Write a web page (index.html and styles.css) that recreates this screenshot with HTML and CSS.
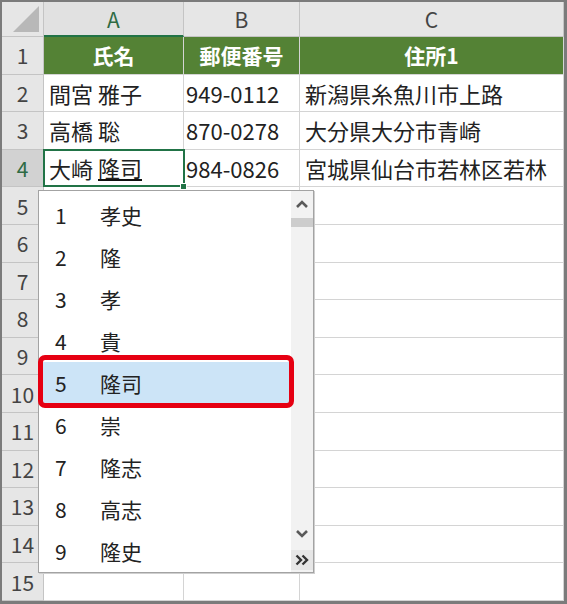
FILE: index.html
```html
<!DOCTYPE html>
<html>
<head>
    <title>氏名の入力候補</title>
    <link rel="stylesheet" href="styles.css">
</head>
<body>
    <div class="sheet">
        <div class="grid">
            <div class="cell head corner"><span class="tri"></span></div>
            <div class="cell head col-sel">A</div>
            <div class="cell head">B</div>
            <div class="cell head">C</div>

            <div class="cell head">1</div>
            <div class="cell title">氏名</div>
            <div class="cell title">郵便番号</div>
            <div class="cell title">住所1</div>

            <div class="cell head">2</div>
            <div class="cell">間宮 雅子</div>
            <div class="cell num">949-0112</div>
            <div class="cell">新潟県糸魚川市上路</div>

            <div class="cell head">3</div>
            <div class="cell">高橋 聡</div>
            <div class="cell num">870-0278</div>
            <div class="cell">大分県大分市青崎</div>

            <div class="cell head row-sel">4</div>
            <div class="cell active">大崎&nbsp;<span class="ime">隆司</span><span class="handle"></span></div>
            <div class="cell num">984-0826</div>
            <div class="cell">宮城県仙台市若林区若林</div>

            <div class="cell head">5</div><div class="cell"></div><div class="cell"></div><div class="cell"></div>
            <div class="cell head">6</div><div class="cell"></div><div class="cell"></div><div class="cell"></div>
            <div class="cell head">7</div><div class="cell"></div><div class="cell"></div><div class="cell"></div>
            <div class="cell head">8</div><div class="cell"></div><div class="cell"></div><div class="cell"></div>
            <div class="cell head">9</div><div class="cell"></div><div class="cell"></div><div class="cell"></div>
            <div class="cell head">10</div><div class="cell"></div><div class="cell"></div><div class="cell"></div>
            <div class="cell head">11</div><div class="cell"></div><div class="cell"></div><div class="cell"></div>
            <div class="cell head">12</div><div class="cell"></div><div class="cell"></div><div class="cell"></div>
            <div class="cell head">13</div><div class="cell"></div><div class="cell"></div><div class="cell"></div>
            <div class="cell head">14</div><div class="cell"></div><div class="cell"></div><div class="cell"></div>
            <div class="cell head">15</div><div class="cell"></div><div class="cell"></div><div class="cell"></div>
        </div>

        <!-- IME候補ウィンドウ -->
        <div class="candidates">
            <ul class="items">
                <li><span class="no">1</span>孝史</li>
                <li><span class="no">2</span>隆</li>
                <li><span class="no">3</span>孝</li>
                <li><span class="no">4</span>貴</li>
                <li class="selected"><span class="no">5</span>隆司<span class="mark"></span></li>
                <li><span class="no">6</span>崇</li>
                <li><span class="no">7</span>隆志</li>
                <li><span class="no">8</span>高志</li>
                <li><span class="no">9</span>隆史</li>
            </ul>
            <div class="scroll">
                <div class="arrow up">
                    <svg width="12" height="8" viewBox="0 0 12 8"><path d="M1 7 L6 2 L11 7" fill="none" stroke="#5a5a5a" stroke-width="2.6"/></svg>
                </div>
                <div class="thumb"></div>
                <div class="spacer"></div>
                <div class="arrow down">
                    <svg width="12" height="8" viewBox="0 0 12 8"><path d="M1 1 L6 6 L11 1" fill="none" stroke="#5a5a5a" stroke-width="2.6"/></svg>
                </div>
                <div class="expand">
                    <svg width="14" height="12" viewBox="0 0 14 12"><path d="M1.5 1.5 L6 6 L1.5 10.5 M7.5 1.5 L12 6 L7.5 10.5" fill="none" stroke="#333" stroke-width="2.4"/></svg>
                </div>
            </div>
        </div>
    </div>
</body>
</html>
```

FILE: styles.css
```css
body {
    margin: 0;
    font-family: "Noto Sans CJK JP", "Noto Sans", sans-serif;
}
.sheet {
    position: relative;
    width: 567px;
    height: 604px;
    box-sizing: border-box;
    border-style: solid;
    border-color: #7b7b7b;
    border-width: 2px 3px 3px 2px;
    background: #fff;
}
.grid {
    display: grid;
    grid-template-columns: 42px 140px 116px 1fr;
    grid-template-rows: 35px repeat(15, 1fr);
    height: 100%;
}
.cell {
    position: relative;
    display: flex;
    align-items: center;
    padding-left: 5px;
    border-right: 1px solid #d4d4d4;
    border-bottom: 1px solid #d4d4d4;
    font-size: 22px;
    color: #222;
    white-space: nowrap;
    overflow: hidden;
}
.cell.num {
    padding-left: 2px;
}
.head {
    justify-content: center;
    padding: 0;
    background: #e6e6e6;
    border-color: #c4c4c4;
    font-size: 21px;
    color: #444;
}
.corner {
    overflow: hidden;
}
.tri {
    position: absolute;
    right: 4px;
    bottom: 4px;
    width: 0;
    height: 0;
    border-left: 26px solid transparent;
    border-bottom: 26px solid #b8b8b8;
}
.col-sel {
    background: #e1e1e1;
    color: #2f6b44;
    border-bottom: 2px solid #217346;
}
.row-sel {
    background: #d2d2d2;
    color: #2f6b44;
}
.title {
    justify-content: center;
    padding: 0;
    background: #548235;
    color: #fff;
    font-weight: bold;
    font-size: 21px;
    border-color: #d4d4d4;
}
.active {
    overflow: visible;
    z-index: 1;
}
.active::after {
    content: "";
    position: absolute;
    top: -1px;
    left: -1px;
    right: -2px;
    bottom: -1px;
    border: 2px solid #217346;
}
.handle {
    position: absolute;
    right: -4px;
    bottom: -4px;
    width: 5px;
    height: 5px;
    background: #217346;
    border: 1px solid #fff;
    z-index: 2;
}
.ime {
    border-bottom: 2px solid #111;
    line-height: 24px;
}
.candidates {
    position: absolute;
    left: 36px;
    top: 188px;
    width: 276px;
    height: 383px;
    box-sizing: border-box;
    display: flex;
    background: #fff;
    border: 1px solid #a3a3a3;
    box-shadow: 1px 1px 0 #cfcfcf;
    z-index: 3;
}
.items {
    flex: 1;
    list-style: none;
    margin: 0;
    padding: 3px 0 0 0;
}
.items li {
    position: relative;
    display: flex;
    align-items: center;
    height: 42px;
    padding-left: 16px;
    font-size: 21px;
    color: #222;
}
.no {
    width: 45px;
}
.selected {
    background: #cce4f7;
}
.mark {
    position: absolute;
    top: -7px;
    bottom: -4px;
    left: -1px;
    right: -3px;
    border: 5px solid #e60012;
    border-radius: 7px;
}
.scroll {
    width: 22px;
    display: flex;
    flex-direction: column;
    background: #f2f2f2;
}
.arrow {
    display: flex;
    align-items: center;
    justify-content: center;
    height: 26px;
}
.thumb {
    height: 9px;
    margin-top: 1px;
    background: #cdcdcd;
}
.spacer {
    flex: 1;
}
.arrow.down {
    height: 24px;
    margin-bottom: 4px;
}
.expand {
    display: flex;
    align-items: center;
    justify-content: center;
    height: 20px;
    margin-bottom: 2px;
    background: #e6e6e6;
}
```
